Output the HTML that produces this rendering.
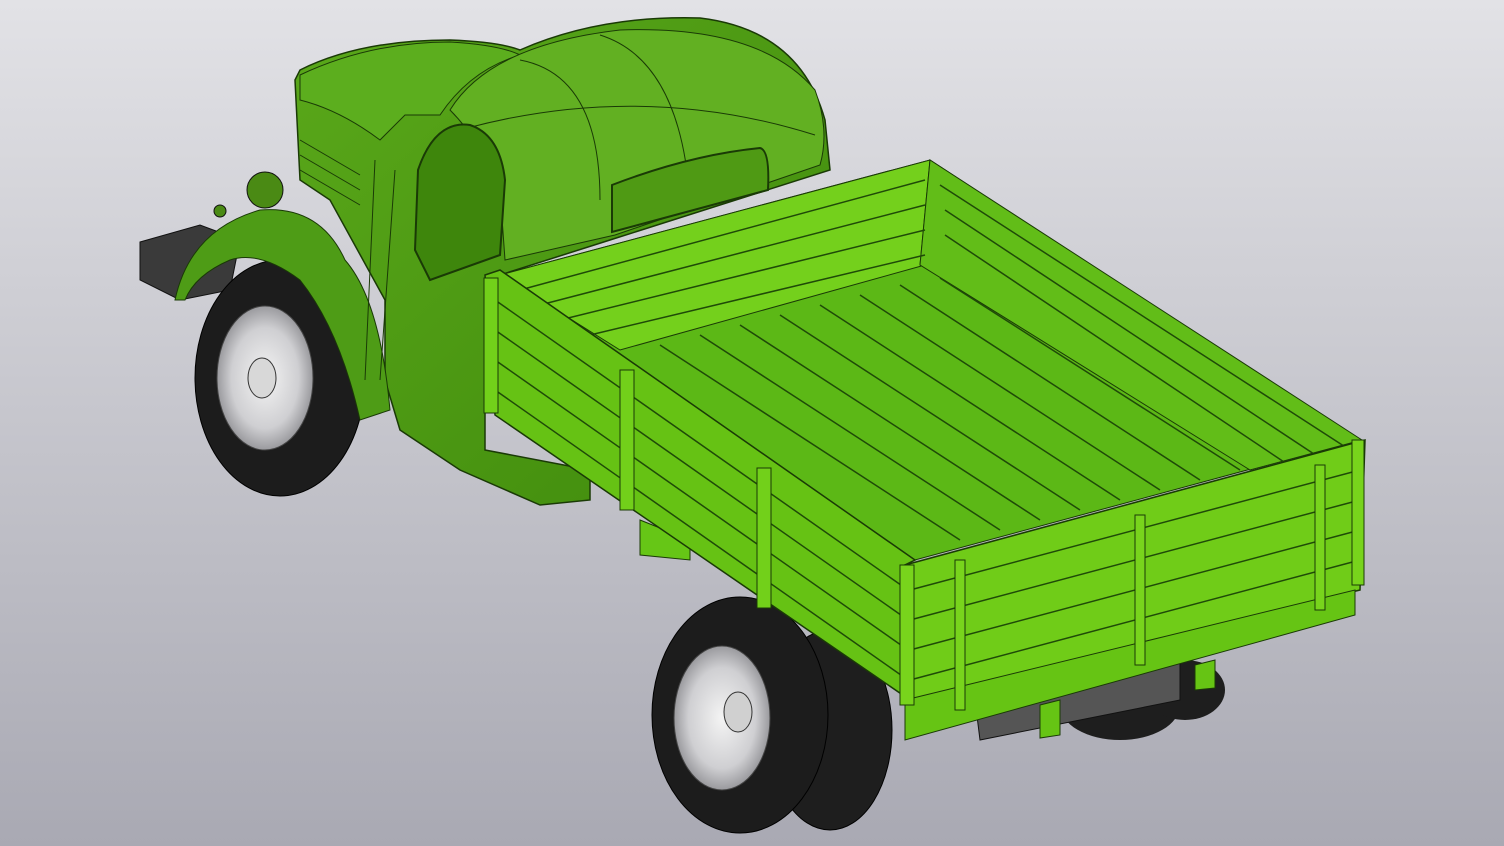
<!DOCTYPE html>
<html><head><meta charset="utf-8"><style>
html,body{margin:0;padding:0;width:1504px;height:846px;overflow:hidden}
</style></head><body>
<svg width="1504" height="846" viewBox="0 0 1504 846" xmlns="http://www.w3.org/2000/svg">
<defs>
<linearGradient id="bg" x1="0" y1="0" x2="0" y2="1">
<stop offset="0" stop-color="#e2e2e6"/><stop offset="1" stop-color="#a9a9b3"/></linearGradient>
<linearGradient id="cab" x1="0" y1="0" x2="1" y2="1">
<stop offset="0" stop-color="#5aa81a"/><stop offset="1" stop-color="#3f8a0c"/></linearGradient>
<radialGradient id="rim" cx="0.5" cy="0.5" r="0.5">
<stop offset="0" stop-color="#f4f4f4"/><stop offset="0.7" stop-color="#cfcfd2"/><stop offset="1" stop-color="#9a9a9e"/></radialGradient>
</defs>
<rect width="1504" height="846" fill="url(#bg)"/>

<!-- front bumper -->
<polygon points="140,242 200,225 240,240 230,290 180,300 140,280" fill="#3a3a3a" stroke="#111"/>
<circle cx="265" cy="190" r="18" fill="#4a8a14" stroke="#111"/>
<circle cx="220" cy="211" r="6" fill="#4a8a14" stroke="#111"/>

<!-- front wheel -->
<ellipse cx="280" cy="378" rx="85" ry="118" fill="#1c1c1c" stroke="#000"/>
<ellipse cx="265" cy="378" rx="48" ry="72" fill="url(#rim)" stroke="#444"/>
<ellipse cx="262" cy="378" rx="14" ry="20" fill="#d8d8d8" stroke="#333"/>

<!-- cab body -->
<path d="M295,80 L300,70 Q360,40 450,40 Q500,42 520,50 Q600,15 700,18 Q800,30 825,120 L830,170 L610,240 L500,275 L485,290 L485,450 L590,470 L590,500 L540,505 L460,470 L400,430 L385,380 L385,300 L330,200 L300,180 Z" fill="url(#cab)" stroke="#1a3a06" stroke-width="1.5"/>
<!-- fender -->
<path d="M175,300 Q190,230 260,210 Q320,205 345,260 Q380,300 390,410 L360,420 Q340,330 300,280 Q260,250 230,260 Q195,275 185,300 Z" fill="#4e9c16" stroke="#1a3a06"/>
<!-- hood top -->
<path d="M300,75 Q370,42 450,42 Q500,45 520,55 Q470,70 440,115 L405,115 L380,140 Q340,110 300,100 Z" fill="#5cae1e" stroke="#1a3a06"/>
<!-- cab roof -->
<path d="M450,110 Q490,45 620,30 Q760,25 815,90 Q830,130 820,165 L615,235 L505,260 L500,190 Q480,140 450,110 Z" fill="#62b022" stroke="#1a3a06"/>
<path d="M520,60 Q600,75 600,200" fill="none" stroke="#1a3a06"/>
<path d="M600,35 Q680,60 690,200" fill="none" stroke="#1a3a06"/>
<path d="M460,130 Q640,80 815,135" fill="none" stroke="#1a3a06"/>
<!-- rear window -->
<path d="M612,185 Q690,155 760,148 Q770,150 768,190 L612,232 Z" fill="#4f9a14" stroke="#1a3a06" stroke-width="2"/>
<!-- door window -->
<path d="M418,170 Q435,120 470,125 Q500,135 505,180 L500,255 L430,280 L415,250 Z" fill="#3e860c" stroke="#1a3a06" stroke-width="2"/>
<path d="M395,170 L380,380 M375,160 L365,380" stroke="#1a3a06" fill="none"/>
<!-- grille slats -->
<g stroke="#1a3a06"><line x1="300" y1="140" x2="360" y2="175"/><line x1="300" y1="155" x2="360" y2="190"/><line x1="300" y1="170" x2="360" y2="205"/></g>

<!-- rear wheels -->
<ellipse cx="830" cy="730" rx="62" ry="100" fill="#1e1e1e" stroke="#000"/>
<ellipse cx="740" cy="715" rx="88" ry="118" fill="#1c1c1c" stroke="#000"/>
<ellipse cx="722" cy="718" rx="48" ry="72" fill="url(#rim)" stroke="#444"/>
<ellipse cx="738" cy="712" rx="14" ry="20" fill="#d0d0d0" stroke="#333"/>
<ellipse cx="1120" cy="705" rx="60" ry="35" fill="#1e1e1e"/>
<ellipse cx="1185" cy="690" rx="40" ry="30" fill="#1e1e1e"/>
<!-- chassis under -->
<polygon points="975,700 1180,660 1180,700 980,740" fill="#555" stroke="#111"/>
<polygon points="640,520 690,540 690,560 640,555" fill="#66c616" stroke="#1a3a06"/>

<!-- bed floor (inner) -->
<polygon points="500,275 930,160 1358,440 915,560" fill="#5cb816" stroke="#1a3a06"/>
<!-- inner far walls -->
<polygon points="500,275 930,160 925,265 620,350" fill="#74d01c" stroke="#1a3a06"/>
<polygon points="930,160 1358,440 1358,445 920,265" fill="#6cc818" stroke="#1a3a06"/>
<polygon points="930,160 1362,440 1250,470 920,265" fill="#62bd18" stroke="#1a3a06"/>
<g stroke="#1f4a08" stroke-width="1.5">
<line x1="520" y1="290" x2="925" y2="180"/><line x1="540" y1="305" x2="925" y2="205"/><line x1="560" y1="320" x2="925" y2="230"/><line x1="590" y1="335" x2="925" y2="255"/>
<line x1="940" y1="185" x2="1350" y2="450"/><line x1="945" y1="210" x2="1320" y2="458"/><line x1="945" y1="235" x2="1290" y2="466"/>
<line x1="660" y1="345" x2="960" y2="540"/><line x1="700" y1="335" x2="1000" y2="530"/><line x1="740" y1="325" x2="1040" y2="520"/><line x1="780" y1="315" x2="1080" y2="510"/><line x1="820" y1="305" x2="1120" y2="500"/><line x1="860" y1="295" x2="1160" y2="490"/><line x1="900" y1="285" x2="1200" y2="480"/><line x1="940" y1="278" x2="1240" y2="470"/>
</g>
<!-- left side panel -->
<polygon points="485,275 500,270 915,560 905,565 910,700 495,415" fill="#66c214" stroke="#1a3a06" stroke-width="1.5"/>
<g stroke="#1f4a08" stroke-width="1.5">
<line x1="495" y1="300" x2="908" y2="590"/><line x1="495" y1="330" x2="908" y2="620"/><line x1="495" y1="360" x2="908" y2="650"/><line x1="495" y1="390" x2="908" y2="680"/>
</g>
<g fill="#72d01a" stroke="#1a3a06">
<rect x="484" y="278" width="14" height="135"/><rect x="620" y="370" width="14" height="140"/><rect x="757" y="468" width="14" height="140"/>
</g>
<!-- rear panel -->
<polygon points="905,565 1365,440 1360,590 910,700" fill="#70cc18" stroke="#1a3a06" stroke-width="1.5"/>
<g stroke="#1f4a08" stroke-width="1.5">
<line x1="910" y1="590" x2="1360" y2="470"/><line x1="910" y1="620" x2="1360" y2="500"/><line x1="910" y1="650" x2="1360" y2="530"/><line x1="910" y1="680" x2="1360" y2="560"/>
</g>
<polygon points="905,700 1355,590 1355,615 905,740" fill="#66c414" stroke="#1a3a06"/>
<polygon points="1040,705 1060,700 1060,735 1040,738" fill="#66c414" stroke="#1a3a06"/>
<polygon points="1195,665 1215,660 1215,688 1195,690" fill="#66c414" stroke="#1a3a06"/>
<g fill="#78d41c" stroke="#1a3a06">
<rect x="900" y="565" width="14" height="140"/><rect x="955" y="560" width="10" height="150"/><rect x="1135" y="515" width="10" height="150"/><rect x="1315" y="465" width="10" height="145"/><rect x="1352" y="440" width="12" height="145"/>
</g>
</svg>
</body></html>
